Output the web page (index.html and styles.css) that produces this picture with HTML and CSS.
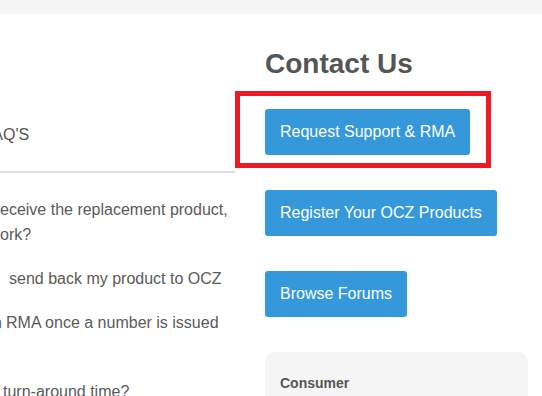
FILE: index.html
```html
<!DOCTYPE html>
<html lang="en">
<head>
<meta charset="utf-8">
<title>Support - Contact Us</title>
<link rel="stylesheet" href="styles.css">
</head>
<body>
<div class="topbar"></div>
<div class="main">
  <section class="faq">
    <div class="faq-tab"><span class="pre w3">FA</span>Q'S</div>
    <ul class="faq-list">
      <li class="faq-item">
        <p class="ln"><span class="pre">How long will it take to r</span>eceive the replacement product,</p>
        <p class="ln"><span class="pre">once OCZ has confirmed my drive does not w</span>ork?</p>
      </li>
      <li class="faq-item">
        <p class="ln"><span class="pre gap9">How do I</span>send back my product to OCZ</p>
      </li>
      <li class="faq-item">
        <p class="ln"><span class="pre w2 gap4">How do I check the status of an</span>RMA once a number is issued</p>
        <p class="ln"><span class="pre">by OCZ?</span></p>
      </li>
      <li class="faq-item">
        <p class="ln"><span class="pre gap3">What is the average RMA</span>turn-around time?</p>
      </li>
    </ul>
  </section>
  <aside class="contact">
    <h2 class="contact-title">Contact Us</h2>
    <div class="highlight"></div>
    <div class="btn-row"><a class="btn" href="#">Request Support &amp; RMA</a></div>
    <div class="btn-row"><a class="btn" href="#">Register Your OCZ Products</a></div>
    <div class="btn-row"><a class="btn" href="#">Browse Forums</a></div>
    <div class="card">
      <h3 class="card-title">Consumer</h3>
    </div>
  </aside>
</div>
</body>
</html>
```
FILE: styles.css
```css
html, body {
  margin: 0;
  padding: 0;
  background: #fff;
  overflow: hidden;
}
body {
  font-family: "Liberation Sans", Arial, sans-serif;
  color: #555;
  width: 542px;
  height: 396px;
}
.topbar {
  height: 14px;
  background: #f5f5f5;
}
.main {
  display: flex;
  align-items: flex-start;
}
.faq {
  width: 235px;
  flex: none;
}
.faq-tab {
  font-size: 16px;
  line-height: 25px;
  padding: 108px 0 24px;
  border-bottom: 2px solid #dddddd;
  white-space: nowrap;
}
.faq-list {
  list-style: none;
  margin: 0;
  padding: 24px 0 0;
}
.faq-item {
  margin-bottom: 19px;
}
.ln {
  margin: 0;
  font-size: 16px;
  line-height: 25px;
  white-space: nowrap;
  color: #5a5a5a;
}
.pre {
  display: inline-block;
  width: 0;
  direction: rtl;
  white-space: nowrap;
}
.pre.w2 { width: 2px; }
.pre.w3 { width: 3px; }
.pre.gap9 { margin-right: 9px; }
.pre.gap4 { margin-right: 4px; }
.pre.gap3 { margin-right: 3px; }
.contact {
  flex: 1;
  position: relative;
  padding: 33px 14px 0 30px;
}
.contact-title {
  margin: 0 0 28px;
  font-size: 28px;
  line-height: 34px;
  font-weight: bold;
  color: #555;
}
.btn-row {
  margin-bottom: 35px;
}
.btn {
  display: inline-block;
  background: #3498db;
  color: #fff;
  text-decoration: none;
  font-size: 16px;
  line-height: 22px;
  padding: 12px 15px;
  border-radius: 3px;
}
.highlight {
  position: absolute;
  left: 0;
  top: 77px;
  width: 256px;
  height: 77px;
  box-sizing: border-box;
  border: 5px solid #ed1c24;
}
.card {
  background: #f5f5f5;
  border-radius: 10px;
  padding: 21px 15px 20px;
}
.card-title {
  margin: 0;
  font-size: 14px;
  line-height: 20px;
  font-weight: bold;
  color: #555;
}
```
